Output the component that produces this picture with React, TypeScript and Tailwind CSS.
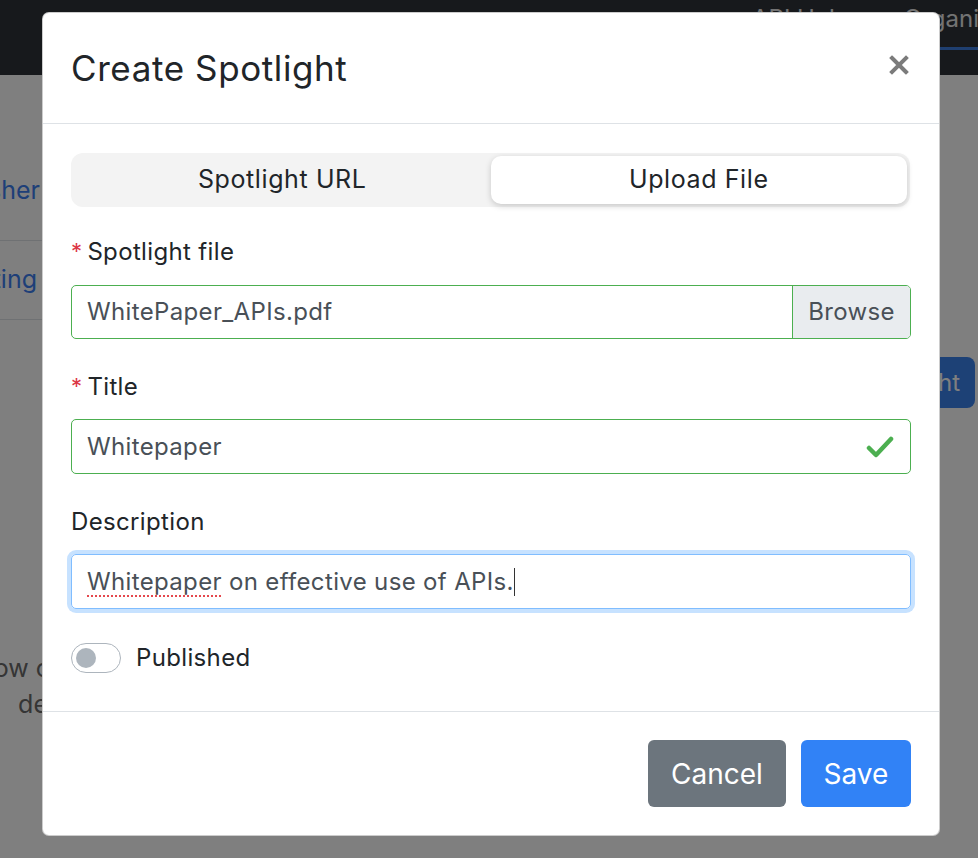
import React from 'react';

function CloseIcon() {
  return (
    <svg width="20" height="20" viewBox="0 0 20 20">
      <path d="M3 3 L17 17 M17 3 L3 17" stroke="#7b7b7b" strokeWidth="4" strokeLinecap="square" />
    </svg>
  );
}

function CheckIcon() {
  return (
    <svg width="28" height="24" viewBox="0 0 28 24">
      <path d="M3 13 L10 20 L25 4" fill="none" stroke="#4caf50" strokeWidth="4.5" strokeLinecap="round" strokeLinejoin="round" />
    </svg>
  );
}

function BackgroundPage() {
  return (
    <div className="flex flex-col h-full">
      {/* Top nav */}
      <div className="h-[75px] bg-[#2e3238] flex items-start gap-[60px] pl-[752px] overflow-hidden whitespace-nowrap text-[24px] text-[#e6e6e6]">
        <div className="pt-[1px]">API Hub</div>
        <div className="pt-[1px] pr-[10px] h-[50px] border-b-[3px] border-[#3f7fe0]">Organizations</div>
      </div>

      {/* Content */}
      <div className="flex flex-1">
        <div className="w-[42px] pt-[87px] flex flex-col text-[25px]">
          <div className="h-[79px] flex items-center justify-end overflow-hidden whitespace-nowrap text-[#3d7ef0] pr-[2px] pb-[20px] border-b border-[#dee2e6]">
            Publisher
          </div>
          <div className="h-[79px] flex items-center justify-end overflow-hidden whitespace-nowrap text-[#3d7ef0] pr-[5px] border-b border-[#dee2e6]">
            Marketing
          </div>
          <div className="mt-[330px] flex flex-col leading-[36px] text-[#6a6a6a]">
            <div className="flex justify-end overflow-hidden whitespace-nowrap -mr-[8px]">Create a spotlight to show c</div>
            <div className="flex justify-end overflow-hidden whitespace-nowrap -mr-[6px]">de</div>
          </div>
        </div>
        <div className="flex-1" />
        <div className="pt-[282px] pr-[3px]">
          <div className="h-[51px] rounded-[8px] bg-[#3b82ec] text-white text-[24px] flex items-center pl-[20px] pr-[15px] whitespace-nowrap">
            New Spotlight
          </div>
        </div>
      </div>
    </div>
  );
}

export default function App() {
  return (
    <div className="relative w-[978px] h-[858px] overflow-hidden bg-white font-['Inter',sans-serif]">
      <BackgroundPage />

      {/* Backdrop */}
      <div className="absolute inset-0 bg-black/50" />

      {/* Modal */}
      <div className="absolute inset-0 flex items-start pl-[42px] pt-[12px]">
        <div className="w-[898px] bg-white rounded-[7px] border border-black/20 flex flex-col">
          {/* Header */}
          <div className="h-[111px] flex items-center justify-between pl-[28px] pr-[30px] border-b border-[#dee2e6]">
            <h5 className="text-[35px] leading-none text-[#212529] tracking-[0.6px]">Create Spotlight</h5>
            <button className="mt-[-6px]">
              <CloseIcon />
            </button>
          </div>

          {/* Body */}
          <div className="pt-[29px] px-[28px] pb-[35px] flex flex-col text-[24px] tracking-[0.35px] text-[#212529]">
            <div className="h-[54px] bg-[#f3f3f3] rounded-[12px] p-[3px] grid grid-cols-2 mr-[1px] text-[25px] tracking-[0.6px]">
              <div className="flex items-center justify-center">Spotlight URL</div>
              <div className="flex items-center justify-center bg-white rounded-[10px] shadow-[0_2px_6px_rgba(0,0,0,0.18)]">Upload File</div>
            </div>

            <label className="mt-[27px] h-[36px] flex items-center">
              <span className="text-[#dc3545] text-[22px] mr-[5px] mt-[-2px]">*</span>Spotlight file
            </label>
            <div className="mt-[15px] h-[54px] flex border border-[#4caf50] rounded-[5px] overflow-hidden">
              <div className="flex-1 flex items-center pl-[15px] text-[#495057]">WhitePaper_APIs.pdf</div>
              <div className="w-[118px] flex items-center justify-center bg-[#e9ecef] border-l border-[#4caf50] text-[#495057]">Browse</div>
            </div>

            <label className="mt-[30px] h-[36px] flex items-center">
              <span className="text-[#dc3545] text-[22px] mr-[5px] mt-[-2px]">*</span>Title
            </label>
            <div className="mt-[14px] h-[55px] flex items-center justify-between border border-[#4caf50] rounded-[5px] pl-[15px] pr-[16px] text-[#495057]">
              <span>Whitepaper</span>
              <CheckIcon />
            </div>

            <label className="mt-[30px] h-[36px] flex items-center">Description</label>
            <div className="mt-[14px] h-[55px] flex items-center border border-[#80bdff] rounded-[5px] pl-[15px] text-[#495057] shadow-[0_0_0_4px_rgba(0,123,255,0.22)]">
              <span className="underline decoration-dotted decoration-[#e5484d] decoration-2 underline-offset-[6px]">Whitepaper</span>
              <span>&nbsp;on effective use of APIs.</span>
              <span className="w-[1.5px] h-[28px] bg-[#333]" />
            </div>

            <div className="mt-[31px] h-[36px] flex items-center gap-[15px]">
              <div className="w-[50px] h-[30px] rounded-full border border-[#adb5bd] bg-white flex items-center pl-[4px]">
                <div className="w-[20px] h-[20px] rounded-full bg-[#adb5bd]" />
              </div>
              <span>Published</span>
            </div>
          </div>

          {/* Footer */}
          <div className="border-t border-[#dee2e6] pt-[28px] pb-[28px] pr-[28px] flex justify-end gap-[15px]">
            <button className="h-[67px] w-[138px] rounded-[6px] bg-[#6c757d] text-white text-[28px]">Cancel</button>
            <button className="h-[67px] w-[110px] rounded-[6px] bg-[#3182f6] text-white text-[28px]">Save</button>
          </div>
        </div>
      </div>
    </div>
  );
}
